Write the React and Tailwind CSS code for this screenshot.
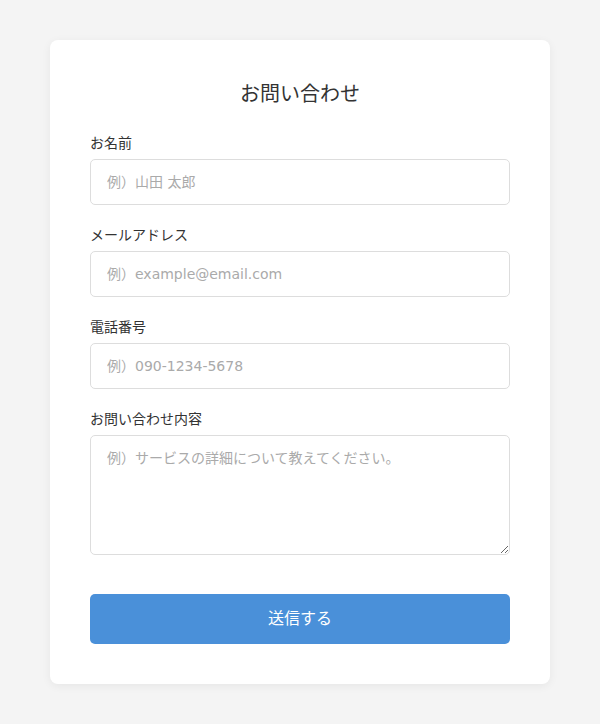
export default function App() {
  const fields = [
    { label: 'お名前', placeholder: '例）山田 太郎', type: 'text' },
    { label: 'メールアドレス', placeholder: '例）example@email.com', type: 'email' },
    { label: '電話番号', placeholder: '例）090-1234-5678', type: 'tel' },
  ]

  return (
    <div className="min-h-screen bg-[#f4f4f4] pt-10 pb-10 font-['DejaVu_Sans','Noto_Sans_CJK_JP',sans-serif]">
      <form className="mx-auto w-[500px] rounded-lg bg-white p-10 shadow-[0_2px_10px_rgba(0,0,0,0.06)]">
        <h1 className="mt-0.5 mb-[27px] text-center text-xl leading-6 text-[#333]">お問い合わせ</h1>

        {fields.map((f) => (
          <div key={f.label} className="mb-5">
            <label className="mb-1.5 block text-sm leading-5 text-[#333]">{f.label}</label>
            <input
              type={f.type}
              placeholder={f.placeholder}
              className="block h-[46px] w-full rounded-[5px] border border-[#ddd] px-4 text-sm text-[#333] outline-none placeholder:text-[#aaa]"
            />
          </div>
        ))}

        <div className="mb-[39px]">
          <label className="mb-1.5 block text-sm leading-5 text-[#333]">お問い合わせ内容</label>
          <textarea
            placeholder="例）サービスの詳細について教えてください。"
            className="block h-[120px] w-full rounded-[5px] border border-[#ddd] px-4 py-3 text-sm text-[#333] outline-none placeholder:text-[#aaa]"
          />
        </div>

        <button
          type="button"
          className="block h-[50px] w-full rounded-[5px] bg-[#4a90d9] text-base text-white"
        >
          送信する
        </button>
      </form>
    </div>
  )
}
